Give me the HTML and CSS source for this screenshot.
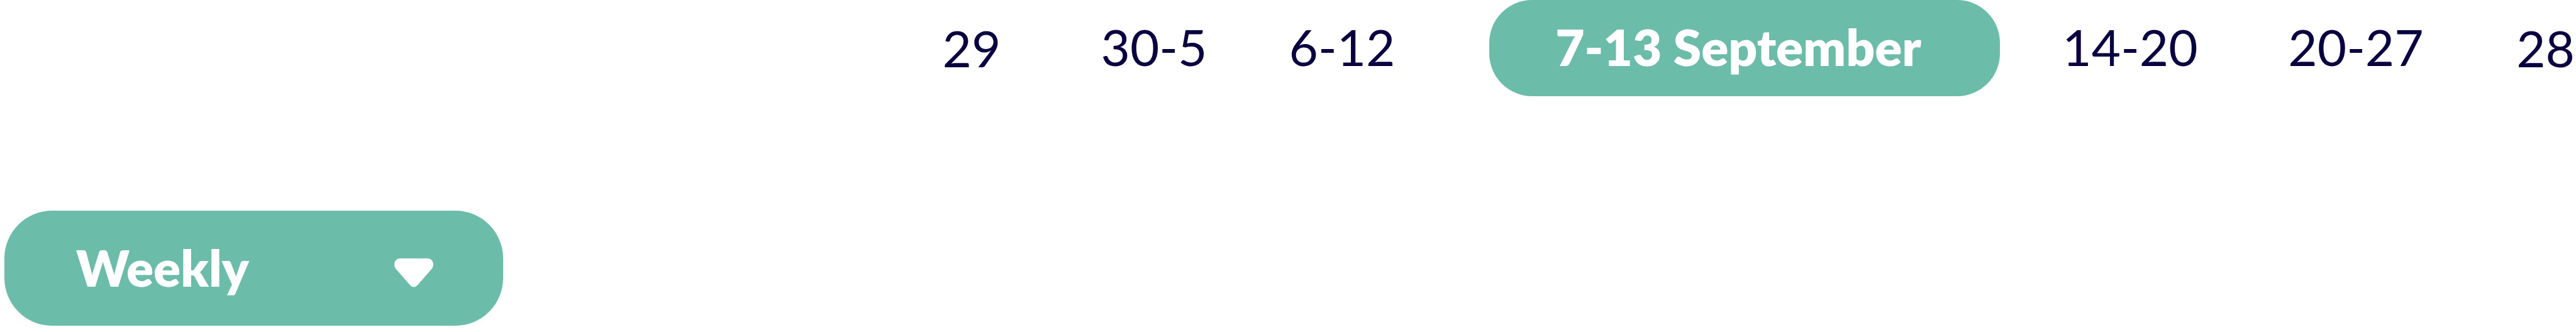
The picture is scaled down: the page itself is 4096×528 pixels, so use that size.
FILE: index.html
```
<!DOCTYPE html>
<html lang="en">
<head>
<meta charset="utf-8">
<title>Calendar weeks</title>
<link rel="stylesheet" href="styles.css">
</head>
<body>
<main class="planner">
  <nav class="weeks" aria-label="Weeks">
    <button class="week week-single" type="button">29</button>
    <button class="week" type="button">30-5</button>
    <button class="week" type="button">6-12</button>
    <button class="week week-current" type="button" aria-current="date">7-13 September</button>
    <button class="week" type="button">14-20</button>
    <button class="week" type="button">20-27</button>
    <button class="week week-single week-last" type="button">28</button>
  </nav>
  <div class="period">
    <select class="period-select" aria-label="Period">
      <option>Weekly</option>
    </select>
    <svg class="period-arrow" viewBox="0 0 78 58" aria-hidden="true">
      <path d="M11 0H67C73 0 78 5 78 12C78 16 77 19 74 22L47 53Q39 62 31 53L4 22C1 19 0 16 0 12C0 5 5 0 11 0Z" fill="currentColor"/>
    </svg>
  </div>
</main>
</body>
</html>
```
FILE: styles.css
```
body {
  margin: 0;
  background: #fff;
  color: #090040;
  font-family: Lato, "Open Sans", sans-serif;
}

.planner {
  display: flex;
  flex-direction: column;
  align-items: flex-start;
  gap: 182px;
}

.weeks {
  display: grid;
  grid-template-columns: 290fr 290fr 308fr 970fr 258fr 460fr 120fr;
  box-sizing: border-box;
  width: 100%;
  padding-left: 34.18%;
}

.week {
  min-width: 0;
  padding: 0 0 4px;
  border: 0;
  background: none;
  color: inherit;
  font: 400 80px/149px Lato, "Open Sans", sans-serif;
  text-align: center;
  white-space: nowrap;
  cursor: pointer;
}

.week-single {
  padding: 2px 0;
}

.week-last {
  padding-right: 2px;
  text-align: right;
}

.week-current {
  margin: 0 78px 0 80px;
  padding-right: 20px;
  border-radius: 68px;
  background: #6cbcaa;
  color: #fff;
  font-weight: 800;
}

.period {
  position: relative;
  width: 793px;
  margin-left: 7px;
  color: #fff;
}

.period-select {
  display: block;
  width: 100%;
  height: 183px;
  padding: 0 0 4px 114px;
  border: 0;
  border-radius: 76px;
  appearance: none;
  background: #6cbcaa;
  box-shadow: 0 4px 6px rgba(0, 0, 0, 0.03);
  color: inherit;
  font: 800 80px/96px Lato, "Open Sans", sans-serif;
  cursor: pointer;
}

.period-arrow {
  position: absolute;
  top: 76px;
  right: 111px;
  width: 62px;
  height: 46px;
  pointer-events: none;
}
```
